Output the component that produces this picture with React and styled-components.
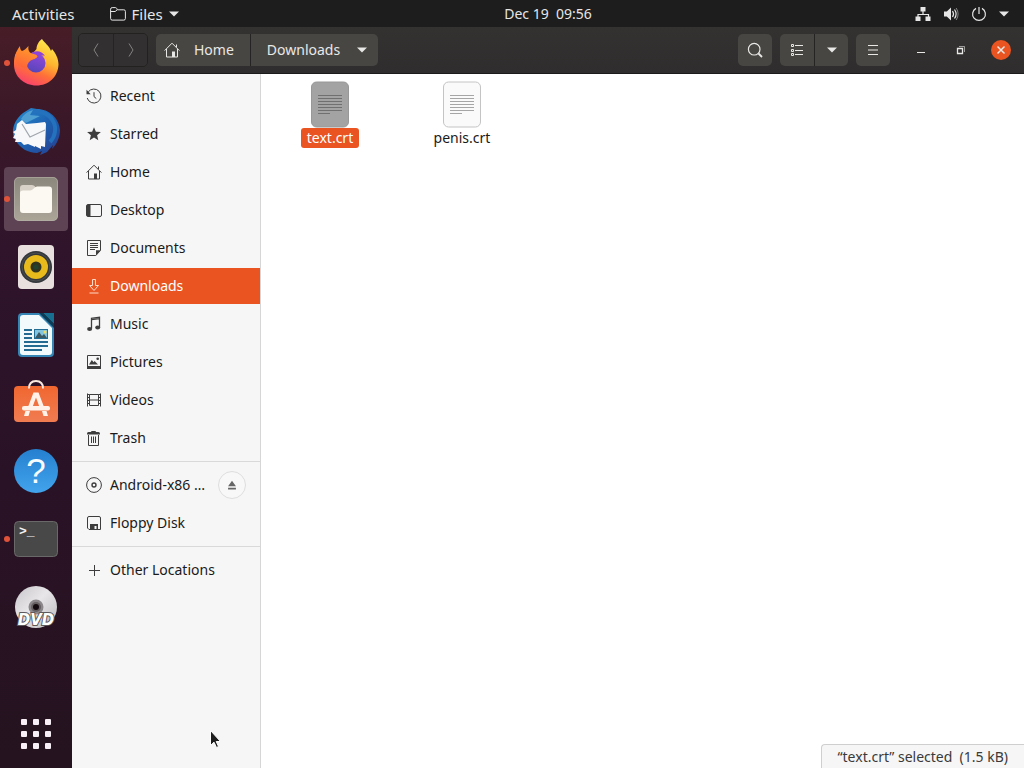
import React from 'react';
import styled, { createGlobalStyle } from 'styled-components';

const GlobalStyle = createGlobalStyle`
  * {
    box-sizing: border-box;
  }

  body {
    margin: 0;
    font-family: 'Noto Sans', sans-serif;
    font-size: 14px;
    line-height: 20px;
    color: #1a1a1a;
    overflow: hidden;
  }

  button {
    font: inherit;
    color: inherit;
    border: 0;
    padding: 0;
    background: none;
  }

  a {
    color: inherit;
    text-decoration: none;
  }

  svg {
    display: block;
    flex-shrink: 0;
  }
`;

const Screen = styled.div`
  position: relative;
  display: flex;
  flex-direction: column;
  height: 100vh;
`;

const TopBar = styled.header`
  display: grid;
  grid-template-columns: 1fr auto 1fr;
  align-items: center;
  height: 27px;
  padding: 0 12px 0 84px;
  background: #1d1d1d;
  color: #e6e6e6;
`;

const AppMenus = styled.div`
  display: flex;
  align-items: center;
  gap: 35px;
  margin-left: -72px;
  font-size: 15px;
`;

const Indicators = styled.div`
  display: flex;
  align-items: center;
  justify-content: flex-end;
  gap: 12px;
  padding-right: 3px;
`;

const BarButton = styled.button`
  display: flex;
  align-items: center;
  gap: 6px;
  white-space: pre;
`;

const Workspace = styled.div`
  display: flex;
  flex: 1;
  min-height: 0;
`;

const Dock = styled.nav`
  display: flex;
  flex-direction: column;
  gap: 4px;
  width: 72px;
  padding: 4px 4px 2px;
  background: linear-gradient(#471d27 0%, #3b1828 12%, #2f142b 30%, #2a1226 60%, #25131f 100%);
`;

const DockButton = styled.button`
  display: flex;
  align-items: center;
  justify-content: center;
  position: relative;
  height: 64px;
  border-radius: 4px;
  background: ${({ $active }) => ($active ? '#5d4353' : 'transparent')};
  margin-top: ${({ $last }) => ($last ? 'auto' : '0')};

  &::before {
    content: '';
    display: ${({ $running }) => ($running ? 'block' : 'none')};
    position: absolute;
    left: 0;
    width: 6px;
    height: 6px;
    border-radius: 50%;
    background: #e0533a;
  }
`;

const Window = styled.section`
  display: flex;
  flex-direction: column;
  flex: 1;
  min-width: 0;
`;

const HeaderBar = styled.div`
  display: flex;
  align-items: center;
  height: 47px;
  padding: 0 13px 0 6px;
  background: linear-gradient(#343231, #2f2d2d);
  border-bottom: 1px solid #1c1b1b;
  color: #e8e8e6;
`;

const ButtonGroup = styled.div`
  display: flex;
  height: ${({ $flat }) => ($flat ? '34px' : '32px')};
  margin-right: 8px;
  border: ${({ $flat }) => ($flat ? '1px solid #222120' : '0')};
  border-radius: 5px;
  overflow: hidden;

  button + button {
    border-left: 1px solid #262423;
  }
`;

const HeaderButton = styled.button`
  display: flex;
  align-items: center;
  justify-content: center;
  min-width: 34px;
  background: ${({ $flat }) => ($flat ? '#323030' : '#484643')};
`;

const PathButton = styled(HeaderButton)`
  gap: 14px;
  padding: 0 16px 0 8px;
`;

const CurrentPathButton = styled(HeaderButton)`
  gap: 17px;
  padding: 0 11px 0 16px;
`;

const Spacer = styled.div`
  flex: 1;
`;

const WindowControls = styled.div`
  display: flex;
  align-items: center;
  gap: 20px;
  margin-left: 13px;
`;

const ControlButton = styled.button`
  display: flex;
  align-items: center;
  justify-content: center;
  width: 20px;
  height: 20px;
  border-radius: 50%;
  background: ${({ $close }) => ($close ? '#e95420' : 'transparent')};
`;

const WindowBody = styled.div`
  display: flex;
  flex: 1;
  min-height: 0;
`;

const Sidebar = styled.aside`
  width: 189px;
  padding-top: 4px;
  background: #f6f6f6;
  border-right: 1px solid #d6d6d6;
`;

const PlaceList = styled.ul`
  display: flex;
  flex-direction: column;
  gap: 2px;
  margin: 0;
  padding: 0 0 5px;
  list-style: none;

  & + & {
    border-top: 1px solid #d9d9d9;
    padding-top: 5px;
  }
`;

const PlaceRow = styled.li`
  display: flex;
  align-items: center;
  height: 36px;
  padding-right: 14px;
  background: ${({ $selected }) => ($selected ? '#e95420' : 'transparent')};
  color: ${({ $selected }) => ($selected ? '#ffffff' : '#1a1a1a')};

  svg {
    color: ${({ $selected }) => ($selected ? '#ffd9c9' : '#3d3d3d')};
  }
`;

const PlaceLink = styled.a`
  display: flex;
  align-items: center;
  flex: 1;
  gap: 8px;
  padding-left: 14px;
`;

const EjectButton = styled.button`
  display: flex;
  align-items: center;
  justify-content: center;
  width: 28px;
  height: 28px;
  border: 1px solid #dedede;
  border-radius: 50%;
  background: #f8f8f8;

  svg {
    color: #666666;
  }
`;

const FileView = styled.main`
  position: relative;
  display: grid;
  grid-template-columns: repeat(auto-fill, 132px);
  align-content: start;
  flex: 1;
  padding: 7px 3px;
  background: #ffffff;
`;

const FileButton = styled.button`
  display: flex;
  flex-direction: column;
  align-items: center;
`;

const FileName = styled.span`
  padding: 0 6px;
  border-radius: 3px;
  background: ${({ $selected }) => ($selected ? '#e95420' : 'transparent')};
  color: ${({ $selected }) => ($selected ? '#ffffff' : '#1a1a1a')};
`;

const StatusBar = styled.div`
  position: absolute;
  right: 0;
  bottom: 0;
  height: 24px;
  padding: 2px 16px 0;
  border: 1px solid #cfcfcf;
  border-width: 1px 0 0 1px;
  border-top-left-radius: 4px;
  background: #f6f6f6;
  color: #3a3a3a;
  white-space: pre;
`;

const Pointer = styled.svg`
  position: absolute;
  left: 209px;
  top: 729px;
`;

const Icon = ({ children, size = 16 }) => (
  <svg width={size} height={size} viewBox="0 0 16 16" fill="none" stroke="currentColor" aria-hidden="true">
    {children}
  </svg>
);

const CaretIcon = () => (
  <svg width="10" height="6" viewBox="0 0 10 6" fill="currentColor" aria-hidden="true">
    <path d="M0 .5h10L5 5.5z" />
  </svg>
);

const FolderIcon = () => (
  <Icon>
    <path d="M.6 12.5V3.2Q.6 1.6 2.2 1.6h3.2q1 0 1.4 1l.5 1.2h6.5q1.6 0 1.6 1.6v7.1q0 1.6-1.6 1.6H2.2q-1.6 0-1.6-1.6zM.6 5.5h4.6l2-1.7" />
  </Icon>
);

const HomeIcon = () => (
  <Icon>
    <path d="M.6 8.6 8 1.2l7.4 7.4M2.5 7v8h11V7M12.5 2.5V5" />
    <path d="M8 9.5h3V15H8z" fill="currentColor" stroke="none" />
  </Icon>
);

const RecentIcon = () => (
  <Icon>
    <path d="M2.2 4A7 7 0 1 1 1.2 10M8 4.2V8.6l2.3 2" />
    <path d="M.5 1.8v4.4h4.2z" fill="currentColor" stroke="none" />
  </Icon>
);

const StarIcon = () => (
  <Icon>
    <path d="m8 1.2 1.9 4.6 5 .3-3.8 3.2 1.2 4.9L8 11.5l-4.3 2.7 1.2-4.9-3.8-3.2 5-.3z" fill="currentColor" stroke="none" />
  </Icon>
);

const DesktopIcon = () => (
  <Icon>
    <rect x=".5" y="2.5" width="15" height="12" rx="1.5" />
    <path d="M1 3h3v11H1z" fill="currentColor" stroke="none" />
    <path d="M4 2.5v12" />
  </Icon>
);

const DocumentIcon = () => (
  <Icon>
    <path d="M1.5.5h13v10l-4.7 5H1.5zM4 3.5h8M4 5.5h8M4 7.5h8M4 9.5h5" />
    <path d="M14.5 10.2H10v5.3z" fill="currentColor" stroke="none" />
  </Icon>
);

const DownloadIcon = () => (
  <Icon>
    <path d="M6.5 1.5h3v6h3L8 12.5l-4.5-5h3zM3.5 15h9" />
  </Icon>
);

const MusicIcon = () => (
  <Icon>
    <path d="M5.5 12.5V2.2l8-1v10M5.5 3.6l8-1" strokeWidth="1.3" />
    <ellipse cx="3.6" cy="12.9" rx="2.5" ry="2" fill="currentColor" stroke="none" />
    <ellipse cx="11.7" cy="11.6" rx="2.5" ry="2" fill="currentColor" stroke="none" />
  </Icon>
);

const PictureIcon = () => (
  <Icon>
    <path d="M1.5 1.5h13v13h-13z" />
    <path d="M1 12h14v3H1zM3 10.5 5.8 6l1.8 2.3 1-1.3 3.4 3.5z" fill="currentColor" stroke="none" />
    <circle cx="11.7" cy="4.8" r="1.3" fill="currentColor" stroke="none" />
  </Icon>
);

const VideoIcon = () => (
  <Icon>
    <path d="M3.5 2.5h9v11h-9zM3.5 8h9" />
    <path d="M1.5 1.5v13M14.5 1.5v13" />
    <path d="M2.5 2v12M13.5 2v12" strokeWidth="2" strokeDasharray="1 2" />
  </Icon>
);

const TrashIcon = () => (
  <Icon>
    <path d="M2.5 5v10.5h10V5M5.5 6.5v6.5M7.5 6.5v6.5M9.5 6.5v6.5M5.5 2.5v-1h4v1" />
    <path d="M1 3.5Q1 2 2.5 2h10Q14 2 14 3.5v1H1z" fill="currentColor" stroke="none" />
  </Icon>
);

const DiscIcon = () => (
  <Icon>
    <circle cx="8" cy="8" r="7.4" />
    <circle cx="8" cy="8" r="2" strokeWidth="1.4" />
  </Icon>
);

const FloppyIcon = () => (
  <Icon>
    <path d="M3 1.5h10q1.5 0 1.5 1.5v11.5H3L1.5 13V3Q1.5 1.5 3 1.5z" />
    <path d="M4 9h8v6h-1.5v-4H8.500v4H4z" fill="currentColor" stroke="none" />
  </Icon>
);

const PlusIcon = () => (
  <Icon>
    <path d="M8.5 3v11M3 8.5h11" />
  </Icon>
);

const EjectIcon = () => (
  <Icon size={14}>
    <path d="M8 3 12.5 9.5h-9zM3.5 11h9v2h-9z" fill="currentColor" stroke="none" />
  </Icon>
);

const NetworkIcon = () => (
  <Icon>
    <path d="M8 4v4M3 12V8.5h10.5V12" strokeWidth="1.2" />
    <path d="M5.5 1h5v4.500h-5zM.5 10.500h5V15h-5zM10.500 10.500h5V15h-5z" fill="currentColor" stroke="none" />
  </Icon>
);

const VolumeIcon = () => (
  <Icon>
    <path d="M1 5.5h2.800L8 1.500v13l-4.200-4H1z" fill="currentColor" stroke="none" />
    <path d="M9.5 5q2 3 0 6M11.500 3.500q3.200 4.500 0 9" strokeWidth="1.2" />
    <path d="M13.200 2q3.800 6 0 12" opacity=".5" />
  </Icon>
);

const PowerIcon = () => (
  <Icon>
    <path d="M5 2.4a6.400 6.400 0 1 0 6 0M8 1v7" strokeWidth="1.2" />
  </Icon>
);

const FirefoxLogo = () => (
  <svg width="48" height="48" viewBox="0 0 48 48" aria-hidden="true">
    <defs>
      <linearGradient id="fxBody" x1=".75" y1="0" x2=".3" y2="1">
        <stop offset="0" stopColor="#ffee50" />
        <stop offset=".42" stopColor="#ffb52f" />
        <stop offset=".68" stopColor="#ff7038" />
        <stop offset="1" stopColor="#f8406e" />
      </linearGradient>
      <linearGradient id="fxHead" x1=".6" y1="0" x2=".2" y2="1">
        <stop offset="0" stopColor="#ff9c2a" />
        <stop offset="1" stopColor="#ff5f3a" />
      </linearGradient>
      <linearGradient id="fxGlobe" x1=".7" y1="0" x2=".3" y2="1">
        <stop offset="0" stopColor="#9148dd" />
        <stop offset="1" stopColor="#5545b8" />
      </linearGradient>
    </defs>
    <path
      d="M30 0c2.500 4 7 6.500 9 12l1-2c4 4.500 6.500 10 6.500 15.500C46 38 36.500 46.500 24.500 46.500 12 46.500 2 37.500 2 25.500c0-6 .5-9 3-13L8 14h12c2-1 3.500-2.500 4.500-4 0-3 2-8 5.500-10z"
      fill="url(#fxBody)"
    />
    <circle cx="24" cy="24" r="9.5" fill="url(#fxGlobe)" />
    <path d="M18 15c4-4 12-4 15 2-2-.8-3.500-.5-5 0z" fill="#8e44d6" />
    <path d="M3 18c.5-4 2.500-8 5-11 0 2.500.5 4 2 5 2.500-.5 4-2.500 6.500-5-.5 3 0 5 1.500 6.500 2 1.500 6 1.500 7.500 3.500-.5 3-4.500 3-7.500 5-2.500 2-3.500 5-2.500 8-6-1-12-4-12.500-12z" fill="url(#fxHead)" />
  </svg>
);

const ThunderbirdLogo = () => (
  <svg width="50" height="50" viewBox="0 0 50 50" aria-hidden="true">
    <defs>
      <linearGradient id="tbBody" x1="0" y1="0" x2="1" y2="1">
        <stop offset="0" stopColor="#2a8fd0" />
        <stop offset=".5" stopColor="#1d62b2" />
        <stop offset="1" stopColor="#283c8d" />
      </linearGradient>
    </defs>
    <path d="M12 7 20 2l6 1c12 0 22 9 23 21 0 7-3 14-8 19l1-4-6 7-7 3 2-4-5 2c-9 0-17-5-21-12C-1 27 2 15 12 7z" fill="url(#tbBody)" />
    <path d="M18 7c9-3 19-1 24 8 4 7 2 16-3 21" fill="none" stroke="#2471bd" strokeWidth="4" />
    <path d="M10 13Q14 6 22 4l-3 5 10 1-14 7z" fill="#4f9fd3" />
    <path d="m11 14 4 4 11-1 8-1 1 2-1 23-4-1v3l-6-3v1l-7-3-4 1-3-3-6 0 1-3-3-1 2-4-2-2 3-2 1-6z" fill="#f7f8f9" />
    <path d="m11 18 8 13 15-7" fill="none" stroke="#9fa6ad" strokeWidth="1.2" />
  </svg>
);

const FilesLogo = () => (
  <svg width="44" height="44" viewBox="0 0 44 44" aria-hidden="true">
    <defs>
      <linearGradient id="filesBody" x1="0" y1="0" x2="0" y2="1">
        <stop offset="0" stopColor="#8c877d" />
        <stop offset="1" stopColor="#aaa597" />
      </linearGradient>
    </defs>
    <rect width="44" height="44" rx="5" fill="url(#filesBody)" />
    <rect x=".5" y=".5" width="43" height="43" rx="4.5" fill="none" stroke="#b8b2a8" opacity=".6" />
    <path d="M6 18v-7q0-3 3-3h9q2 0 3 1.500L22.500 12H26v6z" fill="#d8d1c8" />
    <path d="M6 16q0-2.500 3-2.500h7q2 0 3.500-1.800T23 9.500h12q3 0 3 3V33q0 3-3 3H9q-3 0-3-3z" fill="#fbf9f2" />
  </svg>
);

const RhythmboxLogo = () => (
  <svg width="38" height="46" viewBox="0 0 38 46" aria-hidden="true">
    <rect x="1" y="1" width="36" height="44" rx="4" fill="#e8e0df" />
    <circle cx="19" cy="23" r="16" fill="#34383b" />
    <circle cx="19" cy="23" r="14" fill="none" stroke="#4c4f50" strokeWidth="1" />
    <circle cx="19" cy="23" r="12" fill="#e8ba1c" />
    <circle cx="19" cy="23" r="5.5" fill="#31351f" />
    <circle cx="19" cy="23" r="2.5" fill="#23432f" />
  </svg>
);

const WriterLogo = () => (
  <svg width="38" height="46" viewBox="0 0 38 46" aria-hidden="true">
    <path d="M5 1h19l13 13v27q0 4-4 4H5q-4 0-4-4V5q0-4 4-4z" fill="#3585b5" />
    <path d="M6 3h16l13 13v24q0 3-3 3H6q-3 0-3-3V6q0-3 3-3z" fill="#f2fafc" />
    <path d="M26 1h11v11z" fill="#176f91" />
    <path d="m22 1 15 15v-4L26 1z" fill="#0d3c57" />
    <path d="M7 18h8M7 22h8M7 26h8M7 30h24M7 34h24M7 38h18" stroke="#236b91" strokeWidth="2" />
    <rect x="17" y="17" width="14" height="10" fill="#226d93" />
    <rect x="18" y="18" width="12" height="8" fill="#83c4df" />
    <path d="m18 26 4-6 3 4 2-2 3 4z" fill="#3a5963" />
    <circle cx="28" cy="20" r="1.5" fill="#f3dc62" />
  </svg>
);

const SoftwareLogo = () => (
  <svg width="46" height="46" viewBox="0 0 46 46" aria-hidden="true">
    <defs>
      <linearGradient id="bag" x1="0" y1="0" x2="0" y2="1">
        <stop offset="0" stopColor="#f06730" />
        <stop offset="1" stopColor="#f07c51" />
      </linearGradient>
    </defs>
    <rect x="1" y="6" width="44" height="36" rx="4" fill="url(#bag)" />
    <path d="M16 8.500Q16 1 23 1t7 7.500" fill="none" stroke="#f9e9df" strokeWidth="2" />
    <path d="M15 27 20.500 12.500h5L31 27h-4.500L23 17.500 19.500 27z" fill="#fff3e9" />
    <path d="M12.500 31h4.500l-1.500 5h-4.500zM33.500 31H29l1.500 5H35z" fill="#fff3e9" />
    <rect x="9" y="26" width="28" height="4.500" rx="2" fill="#fff3e9" />
  </svg>
);

const HelpLogo = () => (
  <svg width="44" height="44" viewBox="0 0 44 44" aria-hidden="true">
    <defs>
      <linearGradient id="helpBody" x1="0" y1="0" x2="0" y2="1">
        <stop offset="0" stopColor="#2580cf" />
        <stop offset="1" stopColor="#42a4ec" />
      </linearGradient>
    </defs>
    <circle cx="22" cy="22" r="22" fill="url(#helpBody)" />
    <text x="22" y="34" textAnchor="middle" fontFamily="Liberation Sans" fontSize="35" fill="#f7fcff">?</text>
  </svg>
);

const TerminalLogo = () => (
  <svg width="44" height="38" viewBox="0 0 44 38" aria-hidden="true">
    <rect x=".5" y="1.5" width="43" height="35" rx="4" fill="#484848" stroke="#6a6969" />
    <text x="5" y="15" fontFamily="Liberation Mono" fontSize="13" fontWeight="700" fill="#f3f3f3">&gt;_</text>
  </svg>
);

const DvdLogo = () => (
  <svg width="44" height="44" viewBox="0 0 44 44" aria-hidden="true">
    <defs>
      <linearGradient id="disc" x1="0" y1="0" x2="1" y2="1">
        <stop offset="0" stopColor="#c7c5ca" />
        <stop offset=".45" stopColor="#e8e6e8" />
        <stop offset="1" stopColor="#bab8bc" />
      </linearGradient>
    </defs>
    <circle cx="22" cy="22" r="21" fill="url(#disc)" />
    <circle cx="22" cy="22" r="7.5" fill="#8b878b" />
    <circle cx="22" cy="22" r="5" fill="#655f62" />
    <circle cx="22" cy="22" r="3" fill="#130a10" />
    <text x="22" y="40" textAnchor="middle" fontFamily="DejaVu Sans" fontSize="15" fontWeight="700" fontStyle="italic" fill="#ffffff" stroke="#5c585b" strokeWidth="2" paintOrder="stroke">DVD</text>
  </svg>
);

const AppsIcon = () => (
  <svg width="30" height="30" viewBox="0 0 30 30" fill="#f8eef5" aria-hidden="true">
    {[0, 12, 24].map((y) => [0, 12, 24].map((x) => (
      <rect key={`${x}-${y}`} x={x} y={y} width="6" height="6" rx="1" />
    )))}
  </svg>
);

const FileIcon = ({ selected }) => (
  <svg width="38" height="47" viewBox="0 0 38 47" aria-hidden="true">
    <rect x=".5" y="1" width="37" height="45" rx="5" fill={selected ? '#a3a3a3' : '#fafafa'} stroke={selected ? '#989898' : '#c4c4c4'} />
    <path
      d="M7 14.5h24M7 17.5h24M7 20.5h24M7 23.5h24M7 26.5h24M7 29.5h24M7 32.5h12"
      stroke={selected ? '#707070' : '#a6a6a6'}
    />
  </svg>
);

const dockApps = [
  { name: 'Firefox', Logo: FirefoxLogo, running: true },
  { name: 'Thunderbird', Logo: ThunderbirdLogo },
  { name: 'Files', Logo: FilesLogo, running: true, active: true },
  { name: 'Rhythmbox', Logo: RhythmboxLogo },
  { name: 'LibreOffice Writer', Logo: WriterLogo },
  { name: 'Ubuntu Software', Logo: SoftwareLogo },
  { name: 'Help', Logo: HelpLogo },
  { name: 'Terminal', Logo: TerminalLogo, running: true },
  { name: 'DVD', Logo: DvdLogo },
];

const places = [
  [
    { name: 'Recent', Glyph: RecentIcon },
    { name: 'Starred', Glyph: StarIcon },
    { name: 'Home', Glyph: HomeIcon },
    { name: 'Desktop', Glyph: DesktopIcon },
    { name: 'Documents', Glyph: DocumentIcon },
    { name: 'Downloads', Glyph: DownloadIcon, selected: true },
    { name: 'Music', Glyph: MusicIcon },
    { name: 'Pictures', Glyph: PictureIcon },
    { name: 'Videos', Glyph: VideoIcon },
    { name: 'Trash', Glyph: TrashIcon },
  ],
  [
    { name: 'Android-x86 …', Glyph: DiscIcon, ejectable: true },
    { name: 'Floppy Disk', Glyph: FloppyIcon },
  ],
  [{ name: 'Other Locations', Glyph: PlusIcon }],
];

const files = [
  { name: 'text.crt', selected: true },
  { name: 'penis.crt' },
];

const Place = ({ name, Glyph, selected, ejectable }) => (
  <PlaceRow $selected={selected}>
    <PlaceLink href="#" aria-current={selected ? 'page' : undefined}>
      <Glyph />
      {name}
    </PlaceLink>
    {ejectable && (
      <EjectButton aria-label="Eject">
        <EjectIcon />
      </EjectButton>
    )}
  </PlaceRow>
);

const Header = () => (
  <HeaderBar>
    <ButtonGroup $flat>
      <HeaderButton $flat aria-label="Back">
        <Icon><path d="M10 1.5 6 8l4 6.5" stroke="#858381" /></Icon>
      </HeaderButton>
      <HeaderButton $flat aria-label="Forward">
        <Icon><path d="m6 1.5 4 6.5-4 6.5" stroke="#858381" /></Icon>
      </HeaderButton>
    </ButtonGroup>
    <ButtonGroup>
      <PathButton>
        <HomeIcon />
        Home
      </PathButton>
      <CurrentPathButton>
        Downloads
        <CaretIcon />
      </CurrentPathButton>
    </ButtonGroup>
    <Spacer />
    <ButtonGroup>
      <HeaderButton aria-label="Search">
        <Icon>
          <circle cx="7.2" cy="7.2" r="5.8" strokeWidth="1.2" />
          <path d="m11.5 11.5 3.5 3.5" strokeWidth="1.8" />
        </Icon>
      </HeaderButton>
    </ButtonGroup>
    <ButtonGroup>
      <HeaderButton aria-label="List view">
        <Icon>
          <path d="M6 3.5h8M6 8.5h8M6 12.5h8M2.5 2.5h2v2h-2zM2.5 7.5h2v2h-2zM2.5 11.5h2v2h-2z" />
        </Icon>
      </HeaderButton>
      <HeaderButton aria-label="View options">
        <CaretIcon />
      </HeaderButton>
    </ButtonGroup>
    <ButtonGroup>
      <HeaderButton aria-label="Menu">
        <Icon><path d="M3 3.5h10M3 8h10M3 12.5h10" /></Icon>
      </HeaderButton>
    </ButtonGroup>
    <WindowControls>
      <ControlButton aria-label="Minimize">
        <Icon><path d="M4 10.5h8" /></Icon>
      </ControlButton>
      <ControlButton aria-label="Restore">
        <Icon>
          <path d="M4.5 6.5h5v5h-5z" strokeWidth="1.3" />
          <path d="M6 4.5h5.5V10" opacity=".6" />
        </Icon>
      </ControlButton>
      <ControlButton $close aria-label="Close">
        <Icon><path d="m4.5 4.5 7 7M11.5 4.5l-7 7" strokeWidth="1.5" /></Icon>
      </ControlButton>
    </WindowControls>
  </HeaderBar>
);

const App = () => (
  <>
    <GlobalStyle />
    <Screen>
      <TopBar>
        <AppMenus>
          <BarButton>Activities</BarButton>
          <BarButton>
            <FolderIcon />
            Files
            <CaretIcon />
          </BarButton>
        </AppMenus>
        <BarButton>{'Dec 19  09:56'}</BarButton>
        <Indicators>
          <NetworkIcon />
          <VolumeIcon />
          <PowerIcon />
          <BarButton aria-label="System menu">
            <CaretIcon />
          </BarButton>
        </Indicators>
      </TopBar>
      <Workspace>
        <Dock aria-label="Dock">
          {dockApps.map(({ name, Logo, running, active }) => (
            <DockButton key={name} aria-label={name} $running={running} $active={active}>
              <Logo />
            </DockButton>
          ))}
          <DockButton $last aria-label="Show Applications">
            <AppsIcon />
          </DockButton>
        </Dock>
        <Window>
          <Header />
          <WindowBody>
            <Sidebar>
              {places.map((group) => (
                <PlaceList key={group[0].name}>
                  {group.map((place) => (
                    <Place key={place.name} {...place} />
                  ))}
                </PlaceList>
              ))}
            </Sidebar>
            <FileView>
              {files.map(({ name, selected }) => (
                <FileButton key={name}>
                  <FileIcon selected={selected} />
                  <FileName $selected={selected}>{name}</FileName>
                </FileButton>
              ))}
              <StatusBar role="status">{'“text.crt” selected  (1.5 kB)'}</StatusBar>
            </FileView>
          </WindowBody>
        </Window>
      </Workspace>
      <Pointer width="14" height="20" viewBox="0 0 14 20" aria-hidden="true">
        <path d="M1.5 1.5v15l3.500-3.300 2.500 5.300 2-1-2.300-5h4.300z" fill="#1e1e1e" stroke="#ffffff" />
      </Pointer>
    </Screen>
  </>
);

export default App;
